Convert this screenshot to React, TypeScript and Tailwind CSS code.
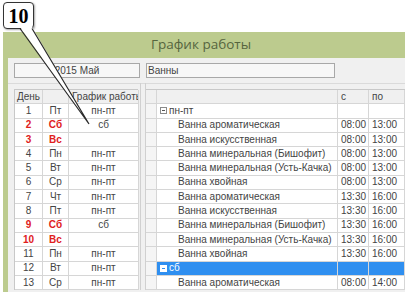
import React from "react";

const leftRows: [string, string, string, boolean][] = [
  ["1", "Пт", "пн-пт", false],
  ["2", "Сб", "сб", true],
  ["3", "Вс", "", true],
  ["4", "Пн", "пн-пт", false],
  ["5", "Вт", "пн-пт", false],
  ["6", "Ср", "пн-пт", false],
  ["7", "Чт", "пн-пт", false],
  ["8", "Пт", "пн-пт", false],
  ["9", "Сб", "сб", true],
  ["10", "Вс", "", true],
  ["11", "Пн", "пн-пт", false],
  ["12", "Вт", "пн-пт", false],
  ["13", "Ср", "пн-пт", false],
];

type RRow = { kind: "group" | "item"; text: string; from?: string; to?: string; sel?: boolean };
const rightRows: RRow[] = [
  { kind: "group", text: "пн-пт" },
  { kind: "item", text: "Ванна ароматическая", from: "08:00", to: "13:00" },
  { kind: "item", text: "Ванна искусственная", from: "08:00", to: "13:00" },
  { kind: "item", text: "Ванна минеральная (Бишофит)", from: "08:00", to: "13:00" },
  { kind: "item", text: "Ванна минеральная (Усть-Качка)", from: "08:00", to: "13:00" },
  { kind: "item", text: "Ванна хвойная", from: "08:00", to: "13:00" },
  { kind: "item", text: "Ванна ароматическая", from: "13:30", to: "16:00" },
  { kind: "item", text: "Ванна искусственная", from: "13:30", to: "16:00" },
  { kind: "item", text: "Ванна минеральная (Бишофит)", from: "13:30", to: "16:00" },
  { kind: "item", text: "Ванна минеральная (Усть-Качка)", from: "13:30", to: "16:00" },
  { kind: "item", text: "Ванна хвойная", from: "13:30", to: "16:00" },
  { kind: "group", text: "сб", sel: true },
  { kind: "item", text: "Ванна ароматическая", from: "08:00", to: "14:00" },
];

const cell = "h-[14.3px] border-r border-b border-[#d6d6d6] flex items-center overflow-hidden whitespace-nowrap";

export default function App() {
  return (
    <div
      className="relative w-[405px] h-[292px] overflow-hidden bg-white text-[10px] leading-none text-[#444]"
      style={{ fontFamily: '"Liberation Sans", Arial, sans-serif' }}
    >
      <div className="h-[32px]" />
      <div className="pl-[3px]">
        <div className="h-[26px] bg-[#bccb8e] flex items-center justify-center">
          <span
            className="text-[13.5px] text-[#56653f] ml-[-6px]"
            style={{ fontFamily: '"Open Sans", sans-serif' }}
          >
            График работы
          </span>
        </div>
        <div className="flex h-[234px]">
          <div className="w-[5px] bg-[#bccb8e]" />
          <div className="flex-1 bg-[#f0f0f0] pl-[6px] flex flex-col">
            <div className="pt-[5px] flex gap-[6px]">
              <div className="w-[126px] h-[15px] border border-[#a8a8a8] bg-[#f7f7f7] flex items-center justify-center">
                2015 Май
              </div>
              <div className="w-[189px] h-[15px] border border-[#a8a8a8] bg-[#f7f7f7] flex items-center pl-[1px]">
                Ванны
              </div>
            </div>
            <div className="mt-[5px] ml-[-6px] border-b border-[#dadada]" />
            <div className="mt-[5px] flex">
              <div className="w-[124px] border-l border-t border-[#c8c8c8] bg-white">
                <div className="grid grid-cols-[28px_26px_70px] bg-[#f0f0f0]">
                  <div className={cell + " pl-[2px]"}>День</div>
                  <div className={cell}></div>
                  <div className={cell + " pl-[3px]"}>График работы</div>
                </div>
                {leftRows.map(([n, d, s, red], i) => (
                  <div key={i} className="grid grid-cols-[28px_26px_70px]">
                    <div className={cell + " justify-center " + (red ? "text-[#e0201c] font-bold" : "")}>{n}</div>
                    <div className={cell + " justify-center " + (red ? "text-[#e0201c] font-bold" : "")}>{d}</div>
                    <div className={cell + " justify-center"}>{s}</div>
                  </div>
                ))}
              </div>
              <div className="w-[8px] flex mt-[-6px]">
                <div className="w-[2px]" />
                <div className="w-px bg-[#d0d0d0]" />
                <div className="w-[4px]" />
                <div className="w-px bg-[#d0d0d0]" />
              </div>
              <div className="flex-1 border-t border-[#c8c8c8] bg-white">
                <div className="grid grid-cols-[11px_181px_31px_36px] bg-[#f0f0f0]">
                  <div className={cell}></div>
                  <div className={cell}></div>
                  <div className={cell + " pl-[3px]"}>с</div>
                  <div className={cell + " pl-[3px]"}>по</div>
                </div>
                {rightRows.map((r, i) => (
                  <div key={i} className="grid grid-cols-[11px_181px_31px_36px]">
                    <div className={cell + " bg-[#f5f5f5]"}></div>
                    {r.kind === "group" ? (
                      <div className={cell + " pl-[3px] gap-[2px] " + (r.sel ? "bg-[#2f8ff0] text-white border-[#6fb0f5]" : "")}>
                        <span
                          className={
                            "w-[7px] h-[7px] border flex items-center justify-center " +
                            (r.sel ? "bg-white border-white" : "border-[#8a8a8a] bg-white")
                          }
                        >
                          <span className={"w-[3px] h-px " + (r.sel ? "bg-[#2f8ff0]" : "bg-[#555]")} />
                        </span>
                        {r.text}
                      </div>
                    ) : (
                      <div className={cell + " pl-[21px]"}>{r.text}</div>
                    )}
                    <div className={cell + " pl-[3px] " + (r.sel ? "bg-[#2f8ff0] border-[#6fb0f5]" : "")}>{r.from}</div>
                    <div className={cell + " pl-[3px] " + (r.sel ? "bg-[#2f8ff0] border-[#6fb0f5]" : "")}>{r.to}</div>
                  </div>
                ))}
              </div>
            </div>
          </div>
        </div>
      </div>

      <div className="absolute left-[3px] top-[2px] w-[31px] h-[27px] rounded-[4px] border-[1.5px] border-[#333] bg-white flex items-center justify-center shadow-[1px_1px_2px_rgba(0,0,0,0.35)]">
        <span
          className="text-[20px] font-bold text-black"
          style={{ fontFamily: '"Liberation Serif", "Times New Roman", serif' }}
        >
          10
        </span>
      </div>
      <svg className="absolute left-0 top-0" width="405" height="292" viewBox="0 0 405 292">
        <polygon points="20,27 32,27 89,124" fill="white" />
        <polyline points="20,28.5 89,124 32,28.5" fill="none" stroke="#2a2a2a" strokeWidth="1.2" />
      </svg>
    </div>
  );
}
